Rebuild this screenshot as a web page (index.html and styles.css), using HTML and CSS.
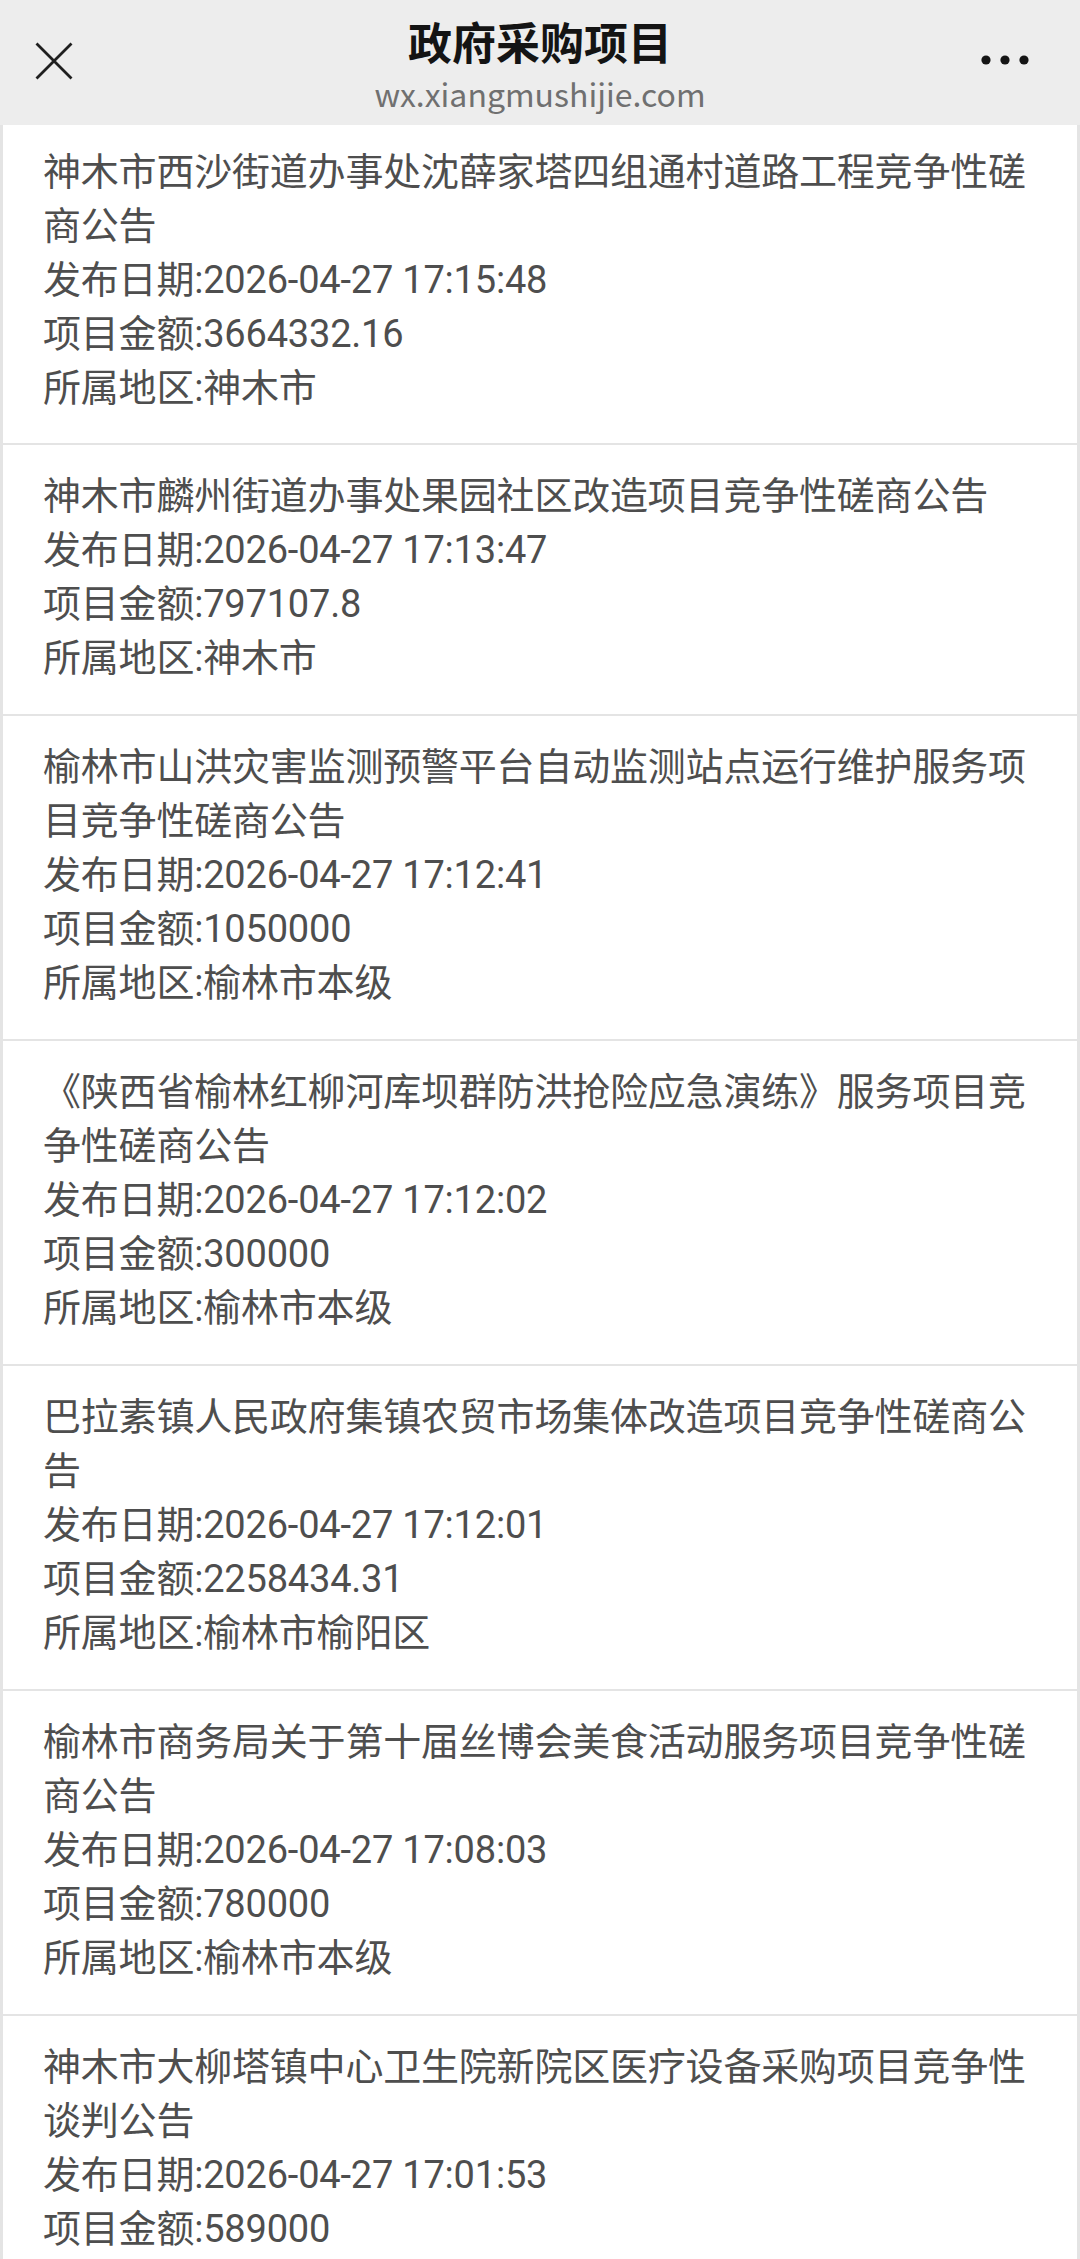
FILE: index.html
```html
<!DOCTYPE html>
<html lang="zh-CN">
<head>
<meta charset="utf-8">
<title>政府采购项目</title>
<link rel="stylesheet" href="styles.css">
</head>
<body>
<header class="topbar">
  <div class="topbar-left">
    <svg class="icon-close" width="38" height="38" viewBox="0 0 38 38" aria-hidden="true">
      <path d="M1.5 1.5 L36.5 36.5 M36.5 1.5 L1.5 36.5" stroke="#1f1f1f" stroke-width="2.8" stroke-linecap="butt" fill="none"/>
    </svg>
  </div>
  <div class="topbar-center">
    <div class="topbar-title">政府采购项目</div>
    <div class="topbar-url">wx.xiangmushijie.com</div>
  </div>
  <div class="topbar-right">
    <svg class="icon-more" width="48" height="10" viewBox="0 0 48 10" aria-hidden="true">
      <circle cx="5" cy="5" r="4.6" fill="#151515"/>
      <circle cx="24" cy="5" r="4.6" fill="#151515"/>
      <circle cx="43" cy="5" r="4.6" fill="#151515"/>
    </svg>
  </div>
</header>

<main class="list">
  <section class="item item-first">
    <div class="line">神木市西沙街道办事处沈薛家塔四组通村道路工程竞争性磋商公告</div>
    <div class="line">发布日期:2026-04-27 17:15:48</div>
    <div class="line">项目金额:3664332.16</div>
    <div class="line">所属地区:神木市</div>
  </section>
  <section class="item">
    <div class="line">神木市麟州街道办事处果园社区改造项目竞争性磋商公告</div>
    <div class="line">发布日期:2026-04-27 17:13:47</div>
    <div class="line">项目金额:797107.8</div>
    <div class="line">所属地区:神木市</div>
  </section>
  <section class="item">
    <div class="line">榆林市山洪灾害监测预警平台自动监测站点运行维护服务项目竞争性磋商公告</div>
    <div class="line">发布日期:2026-04-27 17:12:41</div>
    <div class="line">项目金额:1050000</div>
    <div class="line">所属地区:榆林市本级</div>
  </section>
  <section class="item">
    <div class="line">《陕西省榆林红柳河库坝群防洪抢险应急演练》服务项目竞争性磋商公告</div>
    <div class="line">发布日期:2026-04-27 17:12:02</div>
    <div class="line">项目金额:300000</div>
    <div class="line">所属地区:榆林市本级</div>
  </section>
  <section class="item">
    <div class="line">巴拉素镇人民政府集镇农贸市场集体改造项目竞争性磋商公告</div>
    <div class="line">发布日期:2026-04-27 17:12:01</div>
    <div class="line">项目金额:2258434.31</div>
    <div class="line">所属地区:榆林市榆阳区</div>
  </section>
  <section class="item">
    <div class="line">榆林市商务局关于第十届丝博会美食活动服务项目竞争性磋商公告</div>
    <div class="line">发布日期:2026-04-27 17:08:03</div>
    <div class="line">项目金额:780000</div>
    <div class="line">所属地区:榆林市本级</div>
  </section>
  <section class="item">
    <div class="line">神木市大柳塔镇中心卫生院新院区医疗设备采购项目竞争性谈判公告</div>
    <div class="line">发布日期:2026-04-27 17:01:53</div>
    <div class="line">项目金额:589000</div>
  </section>
</main>
</body>
</html>
```

FILE: styles.css
```css
html, body {
  margin: 0;
  padding: 0;
}

body {
  background: #e4e4e4;
  font-family: Roboto, "Noto Sans CJK SC", sans-serif;
  overflow: hidden;
}

.topbar {
  height: 125px;
  background: #ededed;
  display: grid;
  grid-template-columns: 1fr auto 1fr;
  align-items: start;
}

.topbar-left {
  padding: 42px 0 0 35px;
}

.icon-close,
.icon-more {
  display: block;
}

.topbar-center {
  padding-top: 15px;
  text-align: center;
}

.topbar-title {
  font-family: "Noto Sans CJK SC", sans-serif;
  font-weight: 700;
  font-size: 44px;
  line-height: 52px;
  color: #141414;
}

.topbar-url {
  margin-top: 6px;
  font-family: "Noto Sans CJK SC", sans-serif;
  font-size: 32px;
  line-height: 40px;
  color: #707070;
}

.topbar-right {
  justify-self: end;
  padding: 55px 51px 0 0;
}

.list {
  display: flex;
  flex-direction: column;
  gap: 2px;
  padding: 0 3px;
}

.item {
  background: #ffffff;
  padding: 24px 30px 29px 40px;
}

.item-first {
  padding-top: 20px;
  padding-bottom: 28px;
}

.line {
  font-size: 38px;
  line-height: 54px;
  letter-spacing: -0.2px;
  color: #4e4e4e;
}
```
